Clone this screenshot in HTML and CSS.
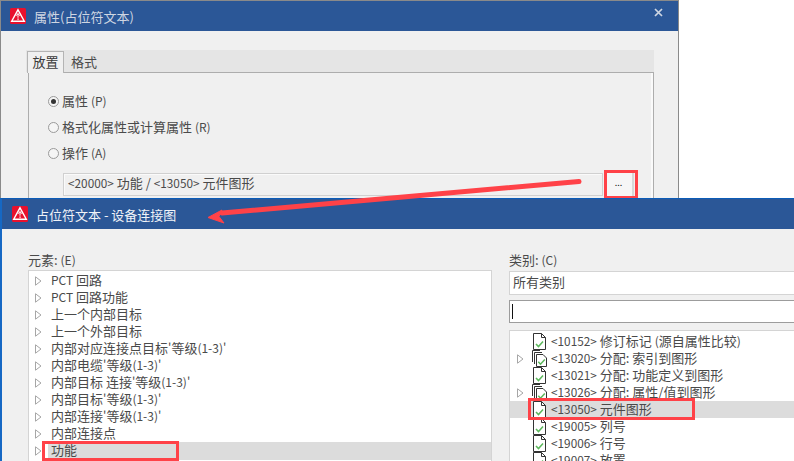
FILE: index.html
```html
<!DOCTYPE html>
<html lang="zh-CN">
<head>
<meta charset="utf-8">
<title>属性(占位符文本)</title>
<link rel="stylesheet" href="styles.css">
</head>
<body>
<svg width="0" height="0" class="defs">
  <defs>
    <symbol id="logo" viewBox="0 0 16 16">
      <rect width="16" height="16" rx="1.500" fill="#e8112d"/>
      <path d="M8 1.800 14.300 13.200H1.700Z" fill="none" stroke="#fff" stroke-width="1.400"/>
      <path d="M8 5.500v4.200M6 7.800 8 5.600 10 7.800" fill="none" stroke="#fff" stroke-width="1"/>
      <rect x="7.400" y="10.500" width="1.300" height="1.300" fill="#fff"/>
    </symbol>
    <symbol id="doc" viewBox="0 0 13 17">
      <path d="M.5 .5H8.500L12.500 4.500V16.500H.5Z" fill="#fff" stroke="#333" stroke-width="1"/>
      <path d="M8.500 .5V4.500H12.500" fill="none" stroke="#333" stroke-width="1"/>
      <path d="M3 11 5.500 13.600 10 8.600" fill="none" stroke="#5cb85c" stroke-width="1.500"/>
    </symbol>
    <symbol id="docs" viewBox="0 0 15 17">
      <path d="M.5 12V.5H8M2.500 14V2.500H10" fill="none" stroke="#333" stroke-width="1"/>
      <path d="M4.500 4.500H11L14.500 8V16.500H4.500Z" fill="#fff" stroke="#333" stroke-width="1"/>
      <path d="M6.300 11.800 8.500 14.200 12.800 9.400" fill="none" stroke="#5cb85c" stroke-width="1.500"/>
    </symbol>
    <symbol id="tri" viewBox="0 0 7 10">
      <path d="M.5 .8 6 5 .5 9.200Z" fill="#fff" stroke="#a6a6a6" stroke-width="1"/>
    </symbol>
  </defs>
</svg>

<section class="window back">
  <header class="titlebar back-title">
    <svg class="logo"><use href="#logo"/></svg>
    <span class="title-text">属性(占位符文本)</span>
    <svg class="close" viewBox="0 0 9 9"><path d="M1 1 8 8M8 1 1 8" stroke="#ced6e3" stroke-width="1.700"/></svg>
  </header>
  <div class="back-body">
    <div class="tabs">
      <span class="tab active">放置</span>
      <span class="tab">格式</span>
    </div>
    <div class="panel">
      <label class="radio-row"><span class="radio checked"></span><span class="txt">属性 <span class="lat">(P)</span></span></label>
      <label class="radio-row"><span class="radio"></span><span class="txt">格式化属性或计算属性 <span class="lat">(R)</span></span></label>
      <label class="radio-row"><span class="radio"></span><span class="txt">操作 <span class="lat">(A)</span></span></label>
      <div class="field-row">
        <div class="field"><span class="code">&lt;20000&gt;</span> 功能 / <span class="code">&lt;13050&gt;</span> 元件图形</div>
        <div class="dots">...</div>
      </div>
    </div>
  </div>
</section>

<section class="window front">
  <header class="titlebar front-title">
    <svg class="logo"><use href="#logo"/></svg>
    <span class="title-text">占位符文本 - 设备连接图</span>
  </header>
  <div class="front-body">
    <div class="col left-col">
      <div class="col-label">元素: <span class="lat">(E)</span></div>
      <ul class="tree">
        <li class="row"><svg class="tri"><use href="#tri"/></svg><span class="txt"><span class="lat">PCT</span> 回路</span></li>
        <li class="row"><svg class="tri"><use href="#tri"/></svg><span class="txt"><span class="lat">PCT</span> 回路功能</span></li>
        <li class="row"><svg class="tri"><use href="#tri"/></svg><span class="txt">上一个内部目标</span></li>
        <li class="row"><svg class="tri"><use href="#tri"/></svg><span class="txt">上一个外部目标</span></li>
        <li class="row"><svg class="tri"><use href="#tri"/></svg><span class="txt">内部对应连接点目标<span class="lat">'</span>等级<span class="lat">(1-3)'</span></span></li>
        <li class="row"><svg class="tri"><use href="#tri"/></svg><span class="txt">内部电缆<span class="lat">'</span>等级<span class="lat">(1-3)'</span></span></li>
        <li class="row"><svg class="tri"><use href="#tri"/></svg><span class="txt">内部目标 连接<span class="lat">'</span>等级<span class="lat">(1-3)'</span></span></li>
        <li class="row"><svg class="tri"><use href="#tri"/></svg><span class="txt">内部目标<span class="lat">'</span>等级<span class="lat">(1-3)'</span></span></li>
        <li class="row"><svg class="tri"><use href="#tri"/></svg><span class="txt">内部连接<span class="lat">'</span>等级<span class="lat">(1-3)'</span></span></li>
        <li class="row"><svg class="tri"><use href="#tri"/></svg><span class="txt">内部连接点</span></li>
        <li class="row selected"><svg class="tri"><use href="#tri"/></svg><span class="txt">功能</span></li>
      </ul>
    </div>
    <div class="col right-col">
      <div class="col-label">类别: <span class="lat">(C)</span></div>
      <div class="combo">所有类别</div>
      <div class="search"><span class="caret"></span></div>
      <ul class="tree cat-tree">
        <li class="row"><span class="tri-gap"></span><svg class="doc"><use href="#doc"/></svg><span class="txt"><span class="code">&lt;10152&gt;</span> 修订标记 <span class="lat">(</span>源自属性比较<span class="lat">)</span></span></li>
        <li class="row"><svg class="tri"><use href="#tri"/></svg><svg class="docs"><use href="#docs"/></svg><span class="txt"><span class="code">&lt;13020&gt;</span> 分配: 索引到图形</span></li>
        <li class="row"><span class="tri-gap"></span><svg class="doc"><use href="#doc"/></svg><span class="txt"><span class="code">&lt;13021&gt;</span> 分配: 功能定义到图形</span></li>
        <li class="row"><svg class="tri"><use href="#tri"/></svg><svg class="docs"><use href="#docs"/></svg><span class="txt"><span class="code">&lt;13026&gt;</span> 分配: 属性/值到图形</span></li>
        <li class="row selected"><span class="tri-gap"></span><svg class="doc"><use href="#doc"/></svg><span class="txt"><span class="code">&lt;13050&gt;</span> 元件图形</span></li>
        <li class="row"><span class="tri-gap"></span><svg class="doc"><use href="#doc"/></svg><span class="txt"><span class="code">&lt;19005&gt;</span> 列号</span></li>
        <li class="row"><span class="tri-gap"></span><svg class="doc"><use href="#doc"/></svg><span class="txt"><span class="code">&lt;19006&gt;</span> 行号</span></li>
        <li class="row"><span class="tri-gap"></span><svg class="doc"><use href="#doc"/></svg><span class="txt"><span class="code">&lt;19007&gt;</span> 放置</span></li>
      </ul>
    </div>
  </div>
</section>

<div class="mark mark-btn"></div>
<div class="mark mark-func"></div>
<div class="mark mark-cat"></div>
<svg class="arrow" viewBox="0 0 794 461">
  <path d="M579 181.500 222 213" stroke="#ff4248" stroke-width="5" stroke-linecap="round" fill="none"/>
  <path d="M208 217.500 222 210 219 216.500 224 223Z" fill="#ff4248" stroke="#ff4248" stroke-width="1"/>
</svg>
</body>
</html>
```
FILE: styles.css
```css
* { box-sizing: border-box; }
html, body { margin: 0; padding: 0; }
body {
  position: relative;
  width: 794px;
  height: 461px;
  overflow: hidden;
  background: #fff;
  font: 13px/17px "Noto Sans CJK SC", "Noto Sans", sans-serif;
  color: #4a4a4a;
}
.defs { position: absolute; }
ul { list-style: none; margin: 0; padding: 0; }
.lat { font-size: 12px; }
.code { font-size: 11.800px; }
.txt { margin-top: -2px; }

.window { position: absolute; left: 0; background: #f0f0f0; }
.back {
  top: 0;
  width: 679px;
  height: 198px;
  border: 1px solid #8a8a8a;
  border-bottom: 0;
  overflow: hidden;
}
.front {
  top: 198px;
  width: 794px;
  height: 263px;
  border-top: 1px solid #0b5cb8;
  border-left: 2px solid #1668c4;
  overflow: hidden;
}

.titlebar { display: flex; align-items: center; height: 30px; background: #2b5797; }
.logo { width: 16px; height: 16px; flex: none; }
.title-text { font-size: 13px; }
.back-title { padding-left: 9px; padding-right: 15px; color: #cfd6e2; }
.back-title .title-text { margin-left: 8px; flex: 1; }
.close { width: 9px; height: 9px; align-self: flex-start; margin-top: 7px; }
.front-title { padding-left: 10px; color: #f0f3f8; }
.front-title .title-text { margin-left: 8px; }

.back-body { padding: 19px 24px 0 25px; }
.tabs { display: flex; height: 22px; background: #e5e5e5; align-items: flex-end; }
.tab { width: 40px; height: 20px; text-align: center; line-height: 19px; }
.tab.active {
  width: 37px;
  background: #f0f0f0;
  border: 1px solid #b4b4b4;
  border-bottom: 0;
  height: 22px;
  margin-left: 1px;
  line-height: 20px;
  position: relative;
  top: 1px;
  color: #3a3a3a;
}
.panel {
  margin-left: 2px;
  height: 130px;
  border: 1px solid #adadad;
  border-bottom: 0;
  box-shadow: inset -2px 0 0 #fafafa;
  padding: 15px 0 0 19px;
}
.radio-row { display: flex; align-items: center; height: 26px; gap: 3px; }
.radio {
  width: 11px;
  height: 11px;
  border-radius: 50%;
  border: 1px solid #9a9a9a;
  background: #f5f5f5;
  position: relative;
  flex: none;
}
.radio.checked::after {
  content: "";
  position: absolute;
  left: 2px;
  top: 2px;
  width: 5px;
  height: 5px;
  border-radius: 50%;
  background: #333;
}
.field-row { display: flex; margin: 7px 0 0 15px; align-items: flex-start; gap: 2px; }
.field {
  width: 540px;
  height: 23px;
  border: 1px solid #d0d0d0;
  box-shadow: inset 1px 1px 0 #fafafa;
  padding-left: 4px;
  line-height: 18px;
}
.dots {
  width: 29px;
  height: 23px;
  background: #f6f6f6;
  border-right: 2px solid #d8d8d8;
  text-align: center;
  line-height: 19px;
  color: #222;
  font-size: 9px;
}

.front-body { display: flex; padding: 22px 0 0 26px; gap: 17px; height: 233px; }
.col { display: flex; flex-direction: column; flex: none; }
.left-col { width: 464px; }
.right-col { width: 320px; }
.col-label { height: 19px; line-height: 17px; }
.tree {
  flex: 1;
  background: #fff;
  border: 1px solid #d4d4d4;
  border-bottom: 0;
  overflow: hidden;
  padding-top: 1px;
}
.row {
  display: flex;
  align-items: center;
  height: 17.050px;
  padding-left: 6px;
  white-space: nowrap;
}
.tri { width: 7px; height: 10px; flex: none; margin-right: 9px; }
.selected { background: #dcdcdc; }
.left-col .selected { margin-left: 19px; padding-left: 0; }
.left-col .selected .tri { margin-left: -13px; }

.combo {
  height: 24px;
  margin-top: 1px;
  background: #fff;
  border: 1px solid #d4d4d4;
  padding-left: 3px;
  line-height: 19px;
}
.search {
  height: 23px;
  margin-top: 5px;
  background: #fff;
  border: 1.500px solid #9c9c9c;
  padding: 3px 0 0 2px;
}
.caret { display: block; width: 1px; height: 15px; background: #111; }
.cat-tree { margin-top: 7px; padding-top: 2px; }
.cat-tree .row { padding-left: 7px; height: 17px; }
.cat-tree .tri { margin-right: 8px; }
.tri-gap { width: 7px; flex: none; margin-right: 9px; }
.doc { width: 13px; height: 17px; flex: none; margin-right: 5px; }
.docs { width: 15px; height: 17px; flex: none; margin-right: 4px; }

.mark { position: absolute; border: 3px solid #ff4248; }
.mark-btn { left: 604px; top: 170px; width: 34px; height: 28px; border-bottom-width: 2px; }
.mark-func { left: 42px; top: 441px; width: 137px; height: 20px; }
.mark-cat { left: 528px; top: 398px; width: 167px; height: 22px; }
.arrow { position: absolute; left: 0; top: 0; width: 794px; height: 461px; pointer-events: none; }
```
